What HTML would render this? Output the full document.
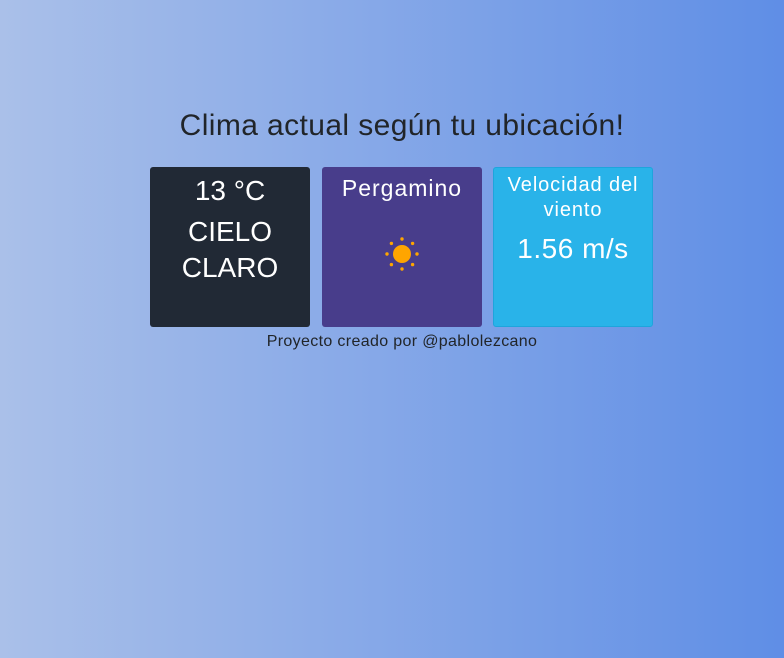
<!DOCTYPE html>
<html><head><meta charset="utf-8"><style>
html,body{margin:0;width:784px;height:658px;overflow:hidden}
body{background:linear-gradient(to right,#aac0e9,#5f8ee6);font-family:"Liberation Sans","DejaVu Sans",sans-serif;position:relative}
h1{position:absolute;left:0;width:804px;top:108px;margin:0;text-align:center;font-weight:400;font-size:30px;letter-spacing:0.4px;color:#212529;line-height:36px}
.b{position:absolute;top:167px;width:160px;height:160px;border-radius:3px;color:#fff;text-align:center;box-sizing:border-box}
.b1{left:150px;background:#212935}
.b2{left:322px;background:#483d8b}
.b3{left:493px;background:#29b3e9;border:1px solid #1ea5dc}
.t{position:absolute;left:0;width:100%}
.f{position:absolute;top:333px;left:0;width:804px;text-align:center;font-size:16px;letter-spacing:0.35px;color:#212529}
</style></head><body>
<h1>Clima actual según tu ubicación!</h1>
<div class="b b1">
<div class="t" style="top:6px;font-size:28px;line-height:36px">13 °C</div>
<div class="t" style="top:47px;font-size:28px;line-height:36px">CIELO<br>CLARO</div>
</div>
<div class="b b2">
<div class="t" style="top:6px;font-size:23px;letter-spacing:1px;line-height:30px">Pergamino</div>
<svg style="position:absolute;left:60px;top:67px" width="40" height="40" viewBox="-20 -20 40 40">
<circle r="9" fill="#ffa500"/>
<g fill="#ffa500">
<circle cx="0" cy="-15" r="1.7"/><circle cx="0" cy="15" r="1.7"/><circle cx="-15" cy="0" r="1.7"/><circle cx="15" cy="0" r="1.7"/>
<circle cx="10.6" cy="-10.6" r="1.7"/><circle cx="-10.6" cy="-10.6" r="1.7"/><circle cx="10.6" cy="10.6" r="1.7"/><circle cx="-10.6" cy="10.6" r="1.7"/>
</g></svg>
</div>
<div class="b b3">
<div class="t" style="top:5px;font-size:20px;letter-spacing:0.9px;line-height:25px">Velocidad del<br>viento</div>
<div class="t" style="top:63px;font-size:28px;letter-spacing:0.5px;line-height:36px">1.56 m/s</div>
</div>
<div class="f">Proyecto creado por @pablolezcano</div>
</body></html>
